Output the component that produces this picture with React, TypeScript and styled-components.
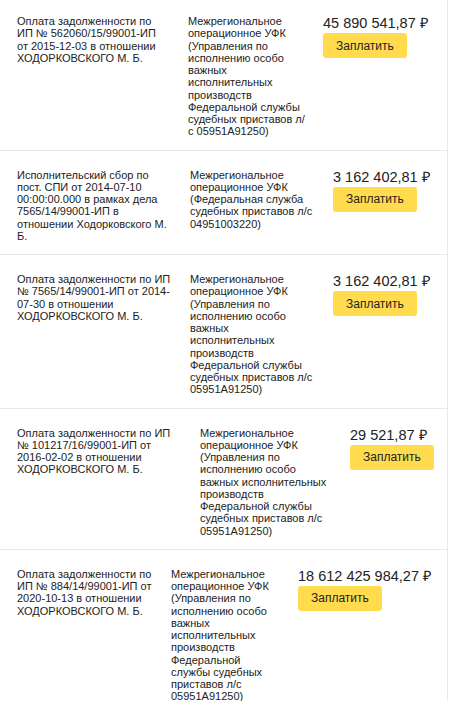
import React from "react";
import styled, { createGlobalStyle } from "styled-components";

const GlobalStyle = createGlobalStyle`
	body {
		margin: 0;
		background: #ffffff;
		font-family: "Liberation Sans", Arial, sans-serif;
		color: #222222;
	}
`;

const List = styled.div`
	width: 448px;
	box-sizing: border-box;
	border-right: 1px solid #e8e8e8;
	background: #ffffff;
`;

const Row = styled.div<{ $cols: [number, number] }>`
	display: grid;
	grid-template-columns: ${(p) => `${p.$cols[0]}px ${p.$cols[1]}px auto`};
	justify-content: start;
	align-items: start;
	padding: 18px 17px 12px;
	border-bottom: 1px solid #e8e8e8;

	&:first-child {
		padding-top: 15px;
	}
`;

const TextCell = styled.div<{ $width: number }>`
	max-width: ${(p) => p.$width}px;
	font-size: 11px;
	line-height: 12.25px;
	color: #222222;
`;

const PayCell = styled.div`
	display: flex;
	flex-direction: column;
	align-items: flex-start;
`;

const Amount = styled.div`
	font-size: 14.5px;
	line-height: 17px;
	white-space: nowrap;
	color: #222222;
`;

const PayButton = styled.button`
	height: 25px;
	margin: 1px 0 0;
	padding: 0 13px;
	border: none;
	border-radius: 3px;
	background-color: #ffdb4d;
	font-family: inherit;
	font-size: 12px;
	color: #222222;
	cursor: pointer;
`;

interface Charge {
	purpose: string;
	recipient: string;
	amount: string;
	// grid tracks for the two text columns, and the width their text wraps at
	cols: [number, number];
	wrap: [number, number];
}

const FULL_RECIPIENT =
	"Межрегиональное операционное УФК (Управления по исполнению особо важных исполнительных производств Федеральной службы судебных приставов л/с 05951А91250)";

const charges: Charge[] = [
	{
		purpose: "Оплата задолженности по ИП № 562060/15/99001-ИП от 2015-12-03 в отношении ХОДОРКОВСКОГО М. Б.",
		recipient: FULL_RECIPIENT,
		amount: "45 890 541,87 ₽",
		cols: [171, 135],
		wrap: [145, 119.5],
	},
	{
		purpose:
			"Исполнительский сбор по пост. СПИ от 2014-07-10 00:00:00.000 в рамках дела 7565/14/99001-ИП в отношении Ходорковского М. Б.",
		recipient: "Межрегиональное операционное УФК (Федеральная служба судебных приставов л/с 04951003220)",
		amount: "3 162 402,81 ₽",
		cols: [173, 143],
		wrap: [154, 135],
	},
	{
		purpose: "Оплата задолженности по ИП № 7565/14/99001-ИП от 2014-\u200B07-30 в отношении ХОДОРКОВСКОГО М. Б.",
		recipient: FULL_RECIPIENT,
		amount: "3 162 402,81 ₽",
		cols: [173, 143],
		wrap: [160, 124],
	},
	{
		purpose: "Оплата задолженности по ИП № 101217/16/99001-ИП от 2016-02-02 в отношении ХОДОРКОВСКОГО М. Б.",
		recipient: FULL_RECIPIENT,
		amount: "29 521,87 ₽",
		cols: [183, 150],
		wrap: [159, 132],
	},
	{
		purpose: "Оплата задолженности по ИП № 884/14/99001-ИП от 2020-10-13 в отношении ХОДОРКОВСКОГО М. Б.",
		recipient: FULL_RECIPIENT,
		amount: "18 612 425 984,27 ₽",
		cols: [154, 127],
		wrap: [144, 104],
	},
];

function ChargeRow({ charge }: { charge: Charge }) {
	return (
		<Row $cols={charge.cols}>
			<TextCell $width={charge.wrap[0]}>{charge.purpose}</TextCell>
			<TextCell $width={charge.wrap[1]}>{charge.recipient}</TextCell>
			<PayCell>
				<Amount>{charge.amount}</Amount>
				<PayButton type="button">Заплатить</PayButton>
			</PayCell>
		</Row>
	);
}

export default function App() {
	return (
		<>
			<GlobalStyle />
			<List>
				{charges.map((charge, i) => (
					<ChargeRow key={i} charge={charge} />
				))}
			</List>
		</>
	);
}
